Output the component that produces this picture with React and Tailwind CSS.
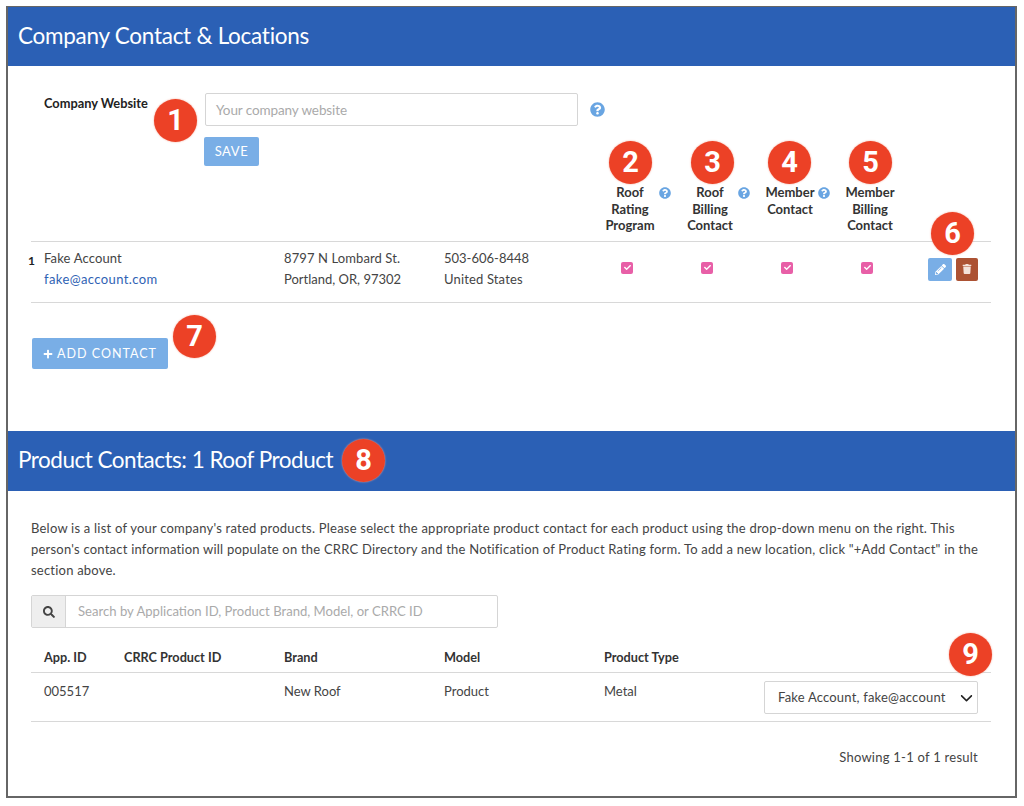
import React from "react";
import { FaSearch, FaPlus, FaPencilAlt, FaTrash, FaQuestionCircle, FaCheck } from "react-icons/fa";
import { FaChevronDown } from "react-icons/fa6";

const body = { fontFamily: '"Lato", "Noto Sans", sans-serif' };

function Badge({ n, className }) {
  return (
    <span className={"absolute z-10 flex h-[43px] w-[43px] items-center justify-center rounded-full bg-[#ec4126] text-[29px] font-bold leading-none text-white shadow-[0_0_2px_#f3a08f] font-['Roboto',sans-serif] " + className}>
      {n}
    </span>
  );
}

function Help({ className = "" }) {
  return <FaQuestionCircle className={"text-[#69a5e2] " + className} />;
}

function Check({ className = "" }) {
  return (
    <span className={"flex h-[12px] w-[12px] items-center justify-center rounded-[2px] bg-[#e85fa7] " + className}>
      <FaCheck className="text-[7px] text-white" />
    </span>
  );
}

function Header({ children, className = "", tracking }) {
  return (
    <div className={"flex items-center pb-[2px] bg-[#2b60b5] pl-[10px] font-['Lato',sans-serif] text-[22.5px] text-white " + tracking + " " + className}>
      {children}
    </div>
  );
}

function HeadCol({ lines, help }) {
  return (
    <div className="relative flex flex-col items-center text-[13px] font-bold leading-[16.5px] text-[#333]">
      {lines.map((l) => (
        <span key={l}>{l}</span>
      ))}
      {help}
    </div>
  );
}

export default function App() {
  return (
    <div style={body} className="h-[806px] w-[1024px] bg-white pl-[6px] pt-[6px]">
      <div className="relative h-[792px] w-[1011px] border-2 border-t-[1px] border-[#666] bg-white text-[13px] text-[#444]">
        <Header className="h-[59px]" tracking="tracking-[-0.27px]">Company Contact &amp; Locations</Header>

        <section className="relative h-[365px] px-[23px]">
          <div className="flex pt-[27px]">
            <label className="w-[174px] pl-[13px] pt-[1px] text-[12.8px] font-bold text-[#222]">Company Website</label>
            <div className="w-[373px]">
              <div className="flex h-[33px] items-center rounded-[2px] border border-[#d5d5d5] pl-[10px] pt-[1px] text-[13.5px] tracking-[-0.1px] text-[#aaa]">
                Your company website
              </div>
              <button className="-ml-[1px] mt-[11px] flex h-[29px] w-[55px] items-center justify-center rounded-[2px] bg-[#79aee6] pt-[1px] text-[13px] tracking-[0.6px] text-white">
                SAVE
              </button>
            </div>
            <Help className="ml-[12px] mt-[9px] text-[15px]" />
          </div>
          <Badge n="1" className="left-[146px] top-[33px]" />
          <Badge n="2" className="left-[601px] top-[75px]" />
          <Badge n="3" className="left-[683px] top-[75px]" />
          <Badge n="4" className="left-[760px] top-[75px]" />
          <Badge n="5" className="left-[841px] top-[75px]" />
          <Badge n="6" className="left-[923px] top-[146px]" />
          <Badge n="7" className="left-[165px] top-[249px]" />

          <div className="absolute left-[582px] top-[118px] grid grid-cols-[80px_80px_80px_80px]">
            <HeadCol lines={["Roof", "Rating", "Program"]} help={<Help className="absolute left-[69px] top-[3px] text-[12px]" />} />
            <HeadCol lines={["Roof", "Billing", "Contact"]} help={<Help className="absolute left-[68px] top-[3px] text-[12px]" />} />
            <HeadCol lines={["Member", "Contact"]} help={<Help className="absolute left-[68px] top-[3px] text-[12px]" />} />
            <HeadCol lines={["Member", "Billing", "Contact"]} />
          </div>

          <div className="absolute left-[23px] top-[175px] grid h-[62px] w-[960px] grid-cols-[13px_240px_160px_146px_80px_80px_80px_80px_1fr] items-center border-y border-[#d8d8d8] leading-[21px]">
            <span className="-ml-[3px] -mt-[3px] self-start pt-[11px] text-[12px] font-bold text-[#222]">1</span>
            <div className="-mt-[6px]">
              <div className="tracking-[0.15px]">Fake Account</div>
              <div className="tracking-[0.4px] text-[#2f62b4]">fake@account.com</div>
            </div>
            <div className="-mt-[6px]">
              <div className="tracking-[0.1px]">8797 N Lombard St.</div>
              <div>Portland, OR, 97302</div>
            </div>
            <div className="-mt-[6px]">
              <div>503-606-8448</div>
              <div className="tracking-[0.15px]">United States</div>
            </div>
            <Check className="-mt-[9px] ml-[31px]" />
            <Check className="-mt-[9px] ml-[31px]" />
            <Check className="-mt-[9px] ml-[31px]" />
            <Check className="-mt-[9px] ml-[31px]" />
            <div className="-mt-[6px] ml-[18px] flex gap-[4px]">
              <span className="flex h-[23px] w-[24px] items-center justify-center rounded-[2px] bg-[#79aee6]">
                <FaPencilAlt className="text-[11px] text-white" />
              </span>
              <span className="flex h-[23px] w-[22px] items-center justify-center rounded-[2px] bg-[#ac5233]">
                <FaTrash className="text-[10px] text-[#f3e2da]" />
              </span>
            </div>
          </div>

          <button className="absolute left-[24px] top-[272px] flex h-[31px] w-[136px] items-center justify-center gap-[4px] rounded-[2px] bg-[#79aee6] pt-[1px] text-[12.5px] tracking-[1px] text-white">
            <FaPlus className="text-[10px]" />
            ADD CONTACT
          </button>
        </section>

        <Header className="h-[60px]" tracking="tracking-[-0.5px]">Product Contacts: 1 Roof Product</Header>
        <Badge n="8" className="left-[334px] top-[432px]" />

        <section className="relative px-[23px] pt-[27px]">
          <p className="w-[960px] pr-[10px] text-[13px] leading-[21px] tracking-[0.22px] text-[#444]">
            Below is a list of your company's rated products. Please select the appropriate product contact for each product using the drop-down menu on the right. This person's contact information will populate on the CRRC Directory and the Notification of Product Rating form. To add a new location, click "+Add Contact" in the section above.
          </p>

          <div className="mt-[14px] flex h-[33px] w-[467px] items-stretch rounded-[2px] border border-[#d5d5d5]">
            <span className="flex w-[34px] items-center justify-center border-r border-[#d5d5d5] bg-[#eeeeee] text-[#444]">
              <FaSearch className="text-[12px]" />
            </span>
            <span className="flex items-center pl-[12px] text-[13.1px] text-[#aaa]">
              Search by Application ID, Product Brand, Model, or CRRC ID
            </span>
          </div>

          <div className="mt-[12px] grid h-[33px] w-[960px] grid-cols-[13px_80px_160px_160px_160px_1fr] items-center border-b border-[#d8d8d8] pt-[4px] text-[12.7px] font-bold text-[#333]">
            <span />
            <span>App. ID</span>
            <span>CRRC Product ID</span>
            <span>Brand</span>
            <span>Model</span>
            <span>Product Type</span>
          </div>
          <div className="grid h-[49px] w-[960px] grid-cols-[13px_80px_160px_160px_160px_160px_1fr] items-start border-b border-[#d8d8d8] pt-[9px]">
            <span />
            <span>005517</span>
            <span />
            <span>New Roof</span>
            <span>Product</span>
            <span>Metal</span>
            <span />
          </div>
          <div className="absolute left-[756px] top-[190px] flex h-[33px] w-[214px] items-center justify-between rounded-[2px] border border-[#d5d5d5] bg-white pl-[13px] pr-[4px]">
            <span className="tracking-[0.2px]">Fake Account, fake@account</span>
            <FaChevronDown className="text-[13px] text-[#222]" />
          </div>
          <Badge n="9" className="left-[941px] top-[142px]" />

          <div className="mt-[26px] w-[947px] text-right tracking-[0.25px]">Showing 1-1 of 1 result</div>
        </section>
      </div>
    </div>
  );
}
